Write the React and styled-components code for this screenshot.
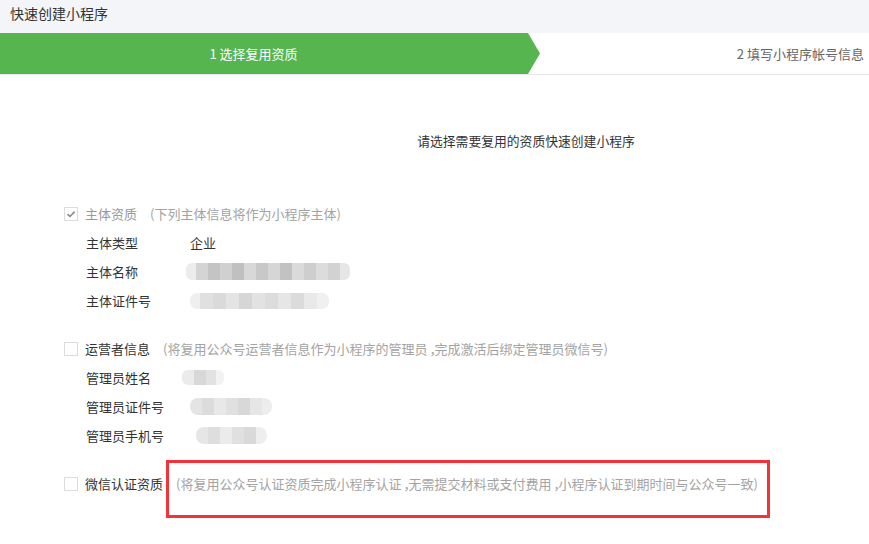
import React from "react";
import styled, { createGlobalStyle } from "styled-components";

const Global = createGlobalStyle`
  html, body { margin: 0; padding: 0; background: #fff; }
  body { font-family: "Noto Sans CJK SC", "Noto Sans", sans-serif; color: #333; }
  * { box-sizing: border-box; }
`;

const Page = styled.div`
  width: 869px;
  height: 544px;
  overflow: hidden;
  background: #fff;
`;

const Header = styled.div`
  height: 33px;
  background: #f4f5f9;
  padding: 3px 0 0 10px;
  font-size: 14px;
  line-height: 20px;
  color: #333;
`;

const Steps = styled.div`
  display: flex;
  height: 42px;
  border-bottom: 1px solid #e7e7eb;
`;

const StepActive = styled.div`
  width: 540px;
  flex: none;
  display: flex;
  align-items: center;
  justify-content: center;
  padding-right: 33px;
  background: #56b54f;
  color: #fff;
  font-size: 13px;
  clip-path: polygon(0 0, 528px 0, 540px 50%, 528px 100%, 0 100%);
`;

const StepNext = styled.div`
  flex: 1;
  display: flex;
  align-items: center;
  justify-content: flex-end;
  padding-right: 5px;
  color: #666;
  font-size: 13px;
`;

const Prompt = styled.div`
  padding: 56px 0 0 183px;
  text-align: center;
  font-size: 12.8px;
  line-height: 20px;
  color: #333;
`;

const Form = styled.div`
  padding: 48px 0 0 64px;
  display: flex;
  flex-direction: column;
  gap: 19px;
`;

const Section = styled.div`
  display: flex;
  flex-direction: column;
`;

const HeadRow = styled.div`
  display: flex;
  align-items: center;
  height: 29px;
`;

const Box = styled.span`
  width: 14px;
  height: 14px;
  flex: none;
  border: 1px solid #dcdcdc;
  background: #fff;
  display: inline-flex;
  align-items: center;
  justify-content: center;
  margin-right: 7px;
`;

const HeadLabel = styled.span`
  font-size: 13px;
  color: ${(p) => (p.$disabled ? "#999" : "#333")};
`;

const Hint = styled.span`
  position: relative;
  margin-left: 13px;
  font-size: 13px;
  color: #a3a3a3;
  white-space: nowrap;
  ${(p) =>
    p.$marked &&
    `
    &::after {
      content: "";
      position: absolute;
      left: -10px;
      right: -12px;
      top: -14px;
      bottom: -25px;
      border: 3px solid #f5313a;
    }
  `}
`;

const Comma = styled.span`
  letter-spacing: -8px;
  margin-left: 2px;
`;

const ItemRow = styled.div`
  display: flex;
  align-items: center;
  height: 29px;
  padding-left: 22px;
  font-size: 13px;
`;

const ItemLabel = styled.span`
  width: ${(p) => p.$w || 104}px;
  flex: none;
  color: #333;
`;

const Value = styled.span`
  color: #333;
`;

const Mosaic = styled.span`
  display: inline-flex;
  height: ${(p) => p.$h}px;
  border-radius: ${(p) => p.$r || 0}px;
  overflow: hidden;
  filter: blur(0.6px);
`;

const Cell = styled.span`
  width: ${(p) => p.$w}px;
  height: 100%;
  background: ${(p) => p.$c};
`;

const Check = () => (
  <svg width="10" height="10" viewBox="0 0 10 10">
    <path d="M1.5 5.2 L4 7.5 L8.6 2.6" fill="none" stroke="#8a8a8a" strokeWidth="1.6" />
  </svg>
);

const Blur = ({ cells, h, r }) => (
  <Mosaic $h={h} $r={r}>
    {cells.map(([w, c], i) => (
      <Cell key={i} $w={w} $c={c} />
    ))}
  </Mosaic>
);

export default function App() {
  return (
    <Page>
      <Global />
      <Header>快速创建小程序</Header>
      <Steps>
        <StepActive>1 选择复用资质</StepActive>
        <StepNext>2 填写小程序帐号信息</StepNext>
      </Steps>
      <Prompt>请选择需要复用的资质快速创建小程序</Prompt>
      <Form>
        <Section>
          <HeadRow>
            <Box>
              <Check />
            </Box>
            <HeadLabel $disabled>主体资质</HeadLabel>
            <Hint>(下列主体信息将作为小程序主体)</Hint>
          </HeadRow>
          <ItemRow>
            <ItemLabel>主体类型</ItemLabel>
            <Value>企业</Value>
          </ItemRow>
          <ItemRow>
            <ItemLabel $w={100}>主体名称</ItemLabel>
            <Blur
              h={17}
              r={6}
              cells={[
                [10, "#ececec"],
                [12, "#d4d4d4"],
                [12, "#c4c4c4"],
                [12, "#d0d0d0"],
                [12, "#c0c0c0"],
                [12, "#d8d8d8"],
                [12, "#c8c8c8"],
                [12, "#d6d6d6"],
                [12, "#c2c2c2"],
                [12, "#dadada"],
                [12, "#cecece"],
                [12, "#dcdcdc"],
                [12, "#d2d2d2"],
                [10, "#e6e6e6"],
              ]}
            />
          </ItemRow>
          <ItemRow>
            <ItemLabel>主体证件号</ItemLabel>
            <Blur
              h={16}
              r={7}
              cells={[
                [10, "#efefef"],
                [13, "#e0e0e0"],
                [13, "#dadada"],
                [13, "#e4e4e4"],
                [13, "#d6d6d6"],
                [13, "#e2e2e2"],
                [13, "#dcdcdc"],
                [13, "#e6e6e6"],
                [13, "#dbdbdb"],
                [13, "#e9e9e9"],
                [12, "#f0f0f0"],
              ]}
            />
          </ItemRow>
        </Section>

        <Section>
          <HeadRow>
            <Box />
            <HeadLabel>运营者信息</HeadLabel>
            <Hint>
              (将复用公众号运营者信息作为小程序的管理员<Comma>，</Comma>完成激活后绑定管理员微信号)
            </Hint>
          </HeadRow>
          <ItemRow>
            <ItemLabel $w={96}>管理员姓名</ItemLabel>
            <Blur
              h={15}
              r={6}
              cells={[
                [12, "#ebebeb"],
                [12, "#d8d8d8"],
                [10, "#e2e2e2"],
                [8, "#f2f2f2"],
              ]}
            />
          </ItemRow>
          <ItemRow>
            <ItemLabel>管理员证件号</ItemLabel>
            <Blur
              h={17}
              r={8}
              cells={[
                [12, "#e4e4e4"],
                [12, "#dcdcdc"],
                [12, "#e8e8e8"],
                [12, "#e0e0e0"],
                [12, "#d8d8d8"],
                [12, "#e6e6e6"],
                [10, "#ededed"],
              ]}
            />
          </ItemRow>
          <ItemRow>
            <ItemLabel $w={110}>管理员手机号</ItemLabel>
            <Blur
              h={17}
              r={8}
              cells={[
                [12, "#e6e6e6"],
                [12, "#dedede"],
                [12, "#ebebeb"],
                [12, "#e0e0e0"],
                [12, "#d9d9d9"],
                [11, "#eeeeee"],
              ]}
            />
          </ItemRow>
        </Section>

        <Section>
          <HeadRow>
            <Box />
            <HeadLabel>微信认证资质</HeadLabel>
            <Hint $marked>
              (将复用公众号认证资质完成小程序认证<Comma>，</Comma>无需提交材料或支付费用<Comma>，</Comma>小程序认证到期时间与公众号一致)
            </Hint>
          </HeadRow>
        </Section>
      </Form>
    </Page>
  );
}
